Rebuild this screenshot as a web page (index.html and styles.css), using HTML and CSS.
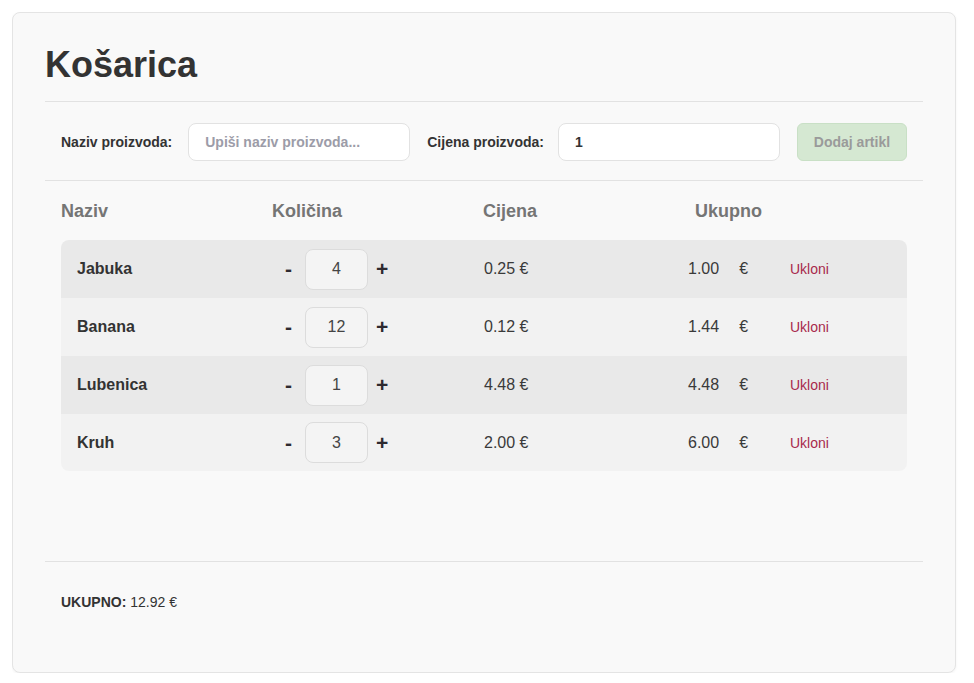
FILE: index.html
```html
<!DOCTYPE html>
<html lang="hr">
<head>
<meta charset="utf-8">
<title>Košarica</title>
<link rel="stylesheet" href="styles.css">
</head>
<body>
<div class="card">
  <header class="card-head">
    <h1 class="title">Košarica</h1>
  </header>
  <form class="add-form">
    <label class="lbl" for="naziv">Naziv proizvoda:</label>
    <input class="inp" id="naziv" type="text" placeholder="Upiši naziv proizvoda...">
    <label class="lbl" for="cijena">Cijena proizvoda:</label>
    <input class="inp" id="cijena" type="text" value="1">
    <button class="btn-add" type="button">Dodaj artikl</button>
  </form>
  <section class="cart">
    <div class="cart-head">
      <span>Naziv</span><span>Količina</span><span>Cijena</span><span>Ukupno</span>
    </div>
    <div class="rows">
      <div class="row">
        <span class="name">Jabuka</span>
        <span class="qty"><b class="minus">-</b><span class="qbox">4</span><b class="plus">+</b></span>
        <span class="price">0.25 €</span>
        <span class="total">1.00<span class="eur">€</span></span>
        <a class="remove">Ukloni</a>
      </div>
      <div class="row">
        <span class="name">Banana</span>
        <span class="qty"><b class="minus">-</b><span class="qbox">12</span><b class="plus">+</b></span>
        <span class="price">0.12 €</span>
        <span class="total">1.44<span class="eur">€</span></span>
        <a class="remove">Ukloni</a>
      </div>
      <div class="row">
        <span class="name">Lubenica</span>
        <span class="qty"><b class="minus">-</b><span class="qbox">1</span><b class="plus">+</b></span>
        <span class="price">4.48 €</span>
        <span class="total">4.48<span class="eur">€</span></span>
        <a class="remove">Ukloni</a>
      </div>
      <div class="row">
        <span class="name">Kruh</span>
        <span class="qty"><b class="minus">-</b><span class="qbox">3</span><b class="plus">+</b></span>
        <span class="price">2.00 €</span>
        <span class="total">6.00<span class="eur">€</span></span>
        <a class="remove">Ukloni</a>
      </div>
    </div>
  </section>
  <footer class="sum">
    <b>UKUPNO:</b> 12.92 €
  </footer>
</div>
</body>
</html>
```

FILE: styles.css
```css
* { box-sizing: border-box; }
html, body { background: #ffffff; }
body {
  margin: 12px;
  font-family: "Liberation Sans", Arial, sans-serif;
  color: #333333;
}
.card {
  width: 944px;
  height: 661px;
  background: #f9f9f9;
  border: 1px solid #e4e4e4;
  border-radius: 8px;
  box-shadow: 0 1px 3px rgba(0,0,0,0.05);
  padding: 31px 32px 0;
}
.card-head {
  border-bottom: 1px solid #e2e2e2;
  padding-bottom: 16px;
}
.title {
  margin: 0;
  font-size: 36px;
  line-height: 41px;
  font-weight: bold;
  color: #333333;
}
.add-form {
  display: flex;
  align-items: center;
  padding: 21px 15px 19px 16px;
  border-bottom: 1px solid #e2e2e2;
}
.lbl {
  font-size: 14px;
  font-weight: bold;
  color: #333333;
}
.inp {
  width: 222px;
  height: 38px;
  border: 1px solid #e2e2e2;
  border-radius: 8px;
  background: #ffffff;
  padding: 0 16px;
  font-family: inherit;
  font-size: 14px;
  font-weight: bold;
  color: #333333;
  outline: none;
}
.inp::placeholder { color: #9c9ca8; }
#naziv { margin-left: 16px; margin-right: 17px; }
#cijena { margin-left: 14px; margin-right: 17px; }
.btn-add {
  width: 110px;
  height: 38px;
  border: 1px solid #c9e0c6;
  border-radius: 6px;
  background: #d5e8d2;
  color: #9a9a9a;
  font-family: inherit;
  font-size: 14px;
  font-weight: bold;
  padding: 0;
}
.cart {
  padding: 20px 16px 90px;
  border-bottom: 1px solid #e2e2e2;
}
.cart-head {
  display: grid;
  grid-template-columns: 211px 211px 212px 1fr;
  font-size: 18px;
  line-height: 21px;
  font-weight: bold;
  color: #757575;
  margin-bottom: 18px;
}
.rows {
  border-radius: 8px;
  overflow: hidden;
}
.row {
  display: grid;
  grid-template-columns: 208px 199px 204px 102px 1fr;
  align-items: center;
  height: 58px;
  padding: 0 16px;
  background: #e9e9e9;
  font-size: 16px;
}
.row:nth-child(even) { background: #f2f2f2; }
.row:last-child { height: 57px; }
.name { font-weight: bold; color: #333333; }
.qty { display: flex; align-items: center; }
.minus, .plus {
  font-size: 21px;
  font-weight: bold;
  color: #2e2a30;
}
.qbox {
  width: 63px;
  height: 41px;
  margin: 0 8px 0 13px;
  border: 1px solid #dcdcdc;
  border-radius: 8px;
  background: #f4f4f4;
  display: flex;
  align-items: center;
  justify-content: center;
  color: #444444;
}
.price, .total { color: #3a3a3a; }
.eur { margin-left: 20px; }
.remove {
  font-size: 14px;
  color: #a82a4c;
  cursor: pointer;
}
.sum {
  padding: 32px 16px 0;
  font-size: 14px;
  line-height: 16px;
  color: #333333;
}
```
